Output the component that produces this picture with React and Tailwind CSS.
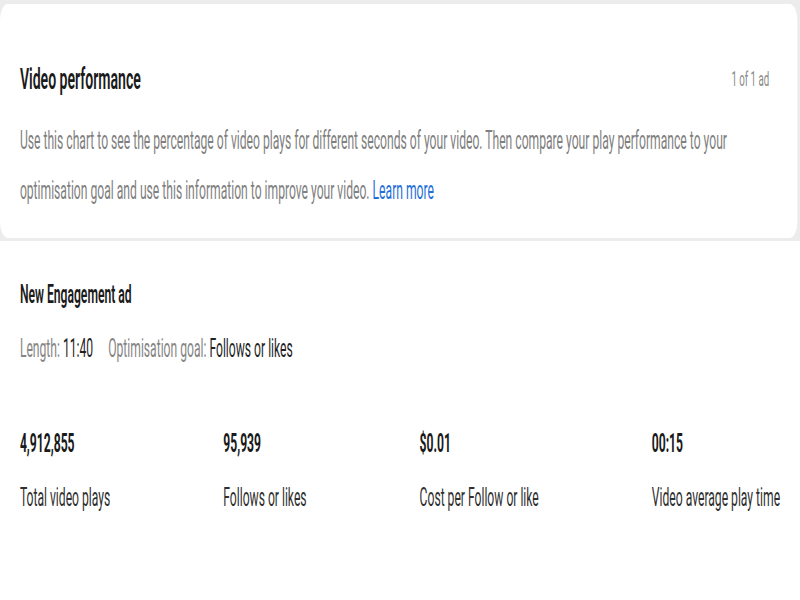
export default function App() {
  const stats = [
    { value: "4,912,855", label: "Total video plays" },
    { value: "95,939", label: "Follows or likes" },
    { value: "$0.01", label: "Cost per Follow or like" },
    { value: "00:15", label: "Video average play time" },
  ];
  return (
    <div className="w-[800px] h-[600px] overflow-hidden bg-[#ececec]">
      <div
        className="w-[1650px] origin-top-left scale-x-[0.485] pt-[4px] flex flex-col gap-[3px]"
        style={{ fontFamily: "Roboto, 'Noto Sans', sans-serif" }}
      >
        <section className="bg-white rounded-[16px] mr-[6px] pl-[41px] pr-[58px] pt-[57px] pb-[22px]">
          <div className="flex items-center justify-between">
            <h2 className="text-[29px] leading-[36px] font-semibold text-[#1a1a1a]">Video performance</h2>
            <span className="text-[20px] leading-[36px] text-[#8a8a8a]">1 of 1 ad</span>
          </div>
          <p className="mt-[19px] text-[25px] leading-[50px] text-[#808080]">
            Use this chart to see the percentage of video plays for different seconds of your video. Then compare your play performance to your optimisation goal and use this information to improve your video.{" "}
            <a className="text-[#1f6fd8]">Learn more</a>
          </p>
        </section>
        <section className="bg-white h-[400px] pl-[41px] pt-[36px]">
          <h3 className="text-[25px] leading-[36px] font-semibold text-[#1a1a1a]">New Engagement ad</h3>
          <div className="mt-[18px] flex gap-[31px] text-[25px] leading-[36px]">
            <span className="text-[#858585]">
              Length: <span className="text-[#1f1f1f]">11:40</span>
            </span>
            <span className="text-[#858585]">
              Optimisation goal: <span className="text-[#1f1f1f]">Follows or likes</span>
            </span>
          </div>
          <div className="mt-[59px] flex gap-[233px]">
            {stats.map((s) => (
              <div key={s.label} className="flex flex-col gap-[18px]">
                <span className="text-[25px] leading-[36px] font-bold text-[#1a1a1a]">{s.value}</span>
                <span className="text-[25px] leading-[36px] text-[#2f2f2f]">{s.label}</span>
              </div>
            ))}
          </div>
        </section>
      </div>
    </div>
  );
}
